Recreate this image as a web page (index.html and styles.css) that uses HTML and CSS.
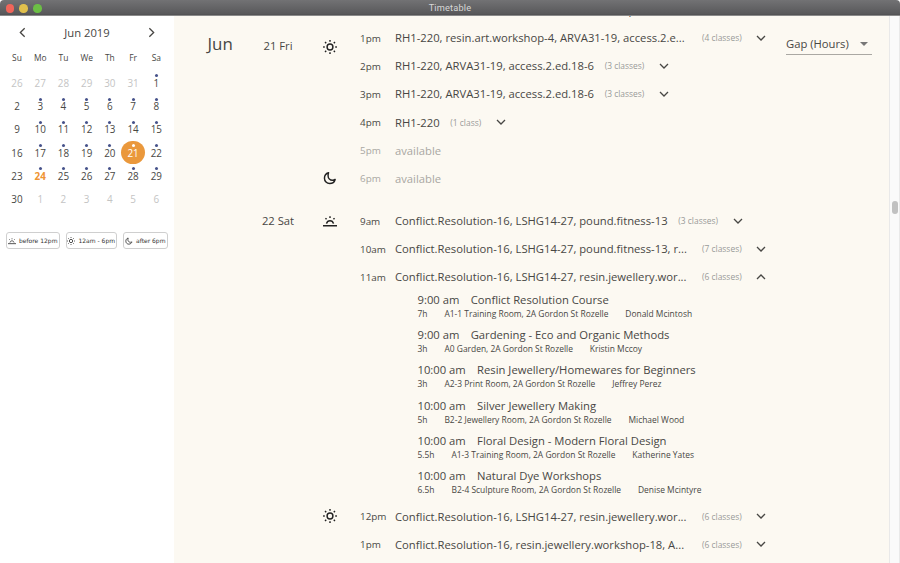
FILE: index.html
```html
<!DOCTYPE html>
<html lang="en">
<head>
<meta charset="utf-8">
<title>Timetable</title>
<link rel="stylesheet" href="styles.css">
</head>
<body>
<svg width="0" height="0" class="defs" aria-hidden="true">
  <symbol id="sun" viewBox="0 0 24 24"><circle cx="12" cy="12" r="5" fill="none" stroke="currentColor" stroke-width="2.5"/><path d="M12 .2v2.8M12 21v2.800M.2 12h2.800M21 12h2.800M3.500 3.500l2 2M18.500 18.500l2 2M3.500 20.500l2-2M18.500 5.500l2-2" fill="none" stroke="currentColor" stroke-width="2.500"/></symbol>
  <symbol id="moon" viewBox="0 0 24 24"><path d="M9.500 3C5 4.200 2.500 8 2.500 12.500c0 5 4 9 9 9 4.500 0 8.300-3 9.300-7-1.300.9-2.800 1.300-4.300 1.300-4.400 0-7.800-3.400-7.800-7.800C8.700 6.200 8.900 4.500 9.500 3z" fill="none" stroke="currentColor" stroke-width="2.500" stroke-linejoin="round"/></symbol>
  <symbol id="rise" viewBox="0 0 24 24"><path d="M0 20h24M6 16.500c.8-3 3-5 6-5s5.200 2 6 5M12 4v2.800M4.200 7.200l1.900 1.900M19.800 7.200l-1.900 1.900" fill="none" stroke="currentColor" stroke-width="2.500"/></symbol>
  <symbol id="down" viewBox="0 0 12 12"><path d="M2 4l4 4 4-4" fill="none" stroke="currentColor" stroke-width="1.300"/></symbol>
  <symbol id="up" viewBox="0 0 12 12"><path d="M2 8l4-4 4 4" fill="none" stroke="currentColor" stroke-width="1.300"/></symbol>
  <symbol id="left" viewBox="0 0 12 12"><path d="M8 2L4 6l4 4" fill="none" stroke="currentColor" stroke-width="1.200"/></symbol>
  <symbol id="right" viewBox="0 0 12 12"><path d="M4 2l4 4-4 4" fill="none" stroke="currentColor" stroke-width="1.200"/></symbol>
</svg>
<div class="window">
  <header class="titlebar">
    <div class="lights"><i class="close"></i><i class="min"></i><i class="max"></i></div>
    <span class="title">Timetable</span>
  </header>
  <div class="body">
    <aside class="sidebar">
      <div class="cal-head"><svg><use href="#left"/></svg><span>Jun 2019</span><svg><use href="#right"/></svg></div>
      <div class="weekdays"><span>Su</span><span>Mo</span><span>Tu</span><span>We</span><span>Th</span><span>Fr</span><span>Sa</span></div>
      <div class="days">
        <span class="out">26</span><span class="out">27</span><span class="out">28</span><span class="out">29</span><span class="out">30</span><span class="out">31</span><span class="dot">1</span>
        <span>2</span><span class="dot">3</span><span class="dot">4</span><span class="dot">5</span><span class="dot">6</span><span class="dot">7</span><span class="dot">8</span>
        <span>9</span><span class="dot">10</span><span class="dot">11</span><span class="dot">12</span><span class="dot">13</span><span class="dot">14</span><span class="dot">15</span>
        <span>16</span><span class="dot">17</span><span class="dot">18</span><span class="dot">19</span><span class="dot">20</span><span class="dot selected">21</span><span class="dot">22</span>
        <span>23</span><span class="dot today">24</span><span class="dot">25</span><span class="dot">26</span><span class="dot">27</span><span class="dot">28</span><span class="dot">29</span>
        <span>30</span><span class="out">1</span><span class="out">2</span><span class="out">3</span><span class="out">4</span><span class="out">5</span><span class="out">6</span>
      </div>
      <div class="filters">
        <button class="f-am"><svg><use href="#rise"/></svg>before 12pm</button>
        <button class="f-day"><svg><use href="#sun"/></svg>12am - 6pm</button>
        <button class="f-pm"><svg><use href="#moon"/></svg>after 6pm</button>
      </div>
    </aside>
    <main class="agenda">
      <h1 class="month">Jun</h1>
      <div class="schedule">
        <section class="day first">
          <h2 class="date">21 Fri</h2>
          <div class="part"><svg><use href="#sun"/></svg></div>
          <div class="slots">
            <div class="slot"><span class="time">12pm</span><span class="label">RH1-220, access.2.ed.18-6, resin.art.workshop-4</span></div>
            <div class="slot"><span class="time">1pm</span><span class="label cut">RH1-220, resin.art.workshop-4, ARVA31-19, access.2.e...</span><span class="count">(4 classes)</span><svg><use href="#down"/></svg></div>
            <div class="slot"><span class="time">2pm</span><span class="label">RH1-220, ARVA31-19, access.2.ed.18-6</span><span class="count">(3 classes)</span><svg><use href="#down"/></svg></div>
            <div class="slot"><span class="time">3pm</span><span class="label">RH1-220, ARVA31-19, access.2.ed.18-6</span><span class="count">(3 classes)</span><svg><use href="#down"/></svg></div>
            <div class="slot"><span class="time">4pm</span><span class="label">RH1-220</span><span class="count">(1 class)</span><svg><use href="#down"/></svg></div>
            <div class="slot free"><span class="time">5pm</span><span class="label">available</span></div>
          </div>
          <div class="part last"><svg><use href="#moon"/></svg></div>
          <div class="slots"><div class="slot free"><span class="time">6pm</span><span class="label">available</span></div></div>
        </section>
        <section class="day">
          <h2 class="date">22 Sat</h2>
          <div class="part"><svg><use href="#rise"/></svg></div>
          <div class="slots">
            <div class="slot"><span class="time">9am</span><span class="label">Conflict.Resolution-16, LSHG14-27, pound.fitness-13</span><span class="count">(3 classes)</span><svg><use href="#down"/></svg></div>
            <div class="slot"><span class="time">10am</span><span class="label cut">Conflict.Resolution-16, LSHG14-27, pound.fitness-13, r...</span><span class="count">(7 classes)</span><svg><use href="#down"/></svg></div>
            <div class="slot"><span class="time">11am</span><span class="label cut">Conflict.Resolution-16, LSHG14-27, resin.jewellery.wor...</span><span class="count">(6 classes)</span><svg><use href="#up"/></svg></div>
            <ul class="classes">
              <li><p class="name"><span>9:00 am</span><span>Conflict Resolution Course</span></p><p class="info"><span>7h</span><span>A1-1 Training Room, 2A Gordon St Rozelle</span><span>Donald Mcintosh</span></p></li>
              <li><p class="name"><span>9:00 am</span><span>Gardening - Eco and Organic Methods</span></p><p class="info"><span>3h</span><span>A0 Garden, 2A Gordon St Rozelle</span><span>Kristin Mccoy</span></p></li>
              <li><p class="name"><span>10:00 am</span><span>Resin Jewellery/Homewares for Beginners</span></p><p class="info"><span>3h</span><span>A2-3 Print Room, 2A Gordon St Rozelle</span><span>Jeffrey Perez</span></p></li>
              <li><p class="name"><span>10:00 am</span><span>Silver Jewellery Making</span></p><p class="info"><span>5h</span><span>B2-2 Jewellery Room, 2A Gordon St Rozelle</span><span>Michael Wood</span></p></li>
              <li><p class="name"><span>10:00 am</span><span>Floral Design - Modern Floral Design</span></p><p class="info"><span>5.5h</span><span>A1-3 Training Room, 2A Gordon St Rozelle</span><span>Katherine Yates</span></p></li>
              <li><p class="name"><span>10:00 am</span><span>Natural Dye Workshops</span></p><p class="info"><span>6.5h</span><span>B2-4 Sculpture Room, 2A Gordon St Rozelle</span><span>Denise Mcintyre</span></p></li>
            </ul>
          </div>
          <div class="part"><svg><use href="#sun"/></svg></div>
          <div class="slots">
            <div class="slot"><span class="time">12pm</span><span class="label cut">Conflict.Resolution-16, LSHG14-27, resin.jewellery.wor...</span><span class="count">(6 classes)</span><svg><use href="#down"/></svg></div>
            <div class="slot"><span class="time">1pm</span><span class="label cut">Conflict.Resolution-16, resin.jewellery.workshop-18, A...</span><span class="count">(6 classes)</span><svg><use href="#down"/></svg></div>
          </div>
        </section>
      </div>
      <div class="gap"><span>Gap (Hours)</span><i></i></div>
      <div class="scroll"><i></i></div>
    </main>
  </div>
</div>
</body>
</html>
```
FILE: styles.css
```css
* { box-sizing: border-box; margin: 0; padding: 0; }
html { background: #fff; }
body { font-family: "Open Sans", "Noto Sans", sans-serif; color: #484744; overflow: hidden; }
.defs { position: absolute; }
ul { list-style: none; }
.window { height: 563px; display: flex; flex-direction: column; border-radius: 4px 4px 0 0; overflow: hidden; }

.titlebar { flex: none; height: 16px; display: grid; grid-template-columns: 60px 1fr 60px; align-items: center; background: linear-gradient(#727274, #59595b 90%, #505052); border-bottom: 1px solid #8a8a8a; }
.lights { display: flex; gap: 5.300px; padding: 1px 0 0 5.500px; }
.lights i { width: 8.500px; height: 8.500px; border-radius: 50%; }
.close { background: #f0655a; }
.min { background: #e1c04c; }
.max { background: #6cbf45; }
.title { text-align: center; font: 400 9.200px/16px Roboto, sans-serif; color: #d8d8d8; letter-spacing: .2px; }

.body { flex: 1; min-height: 0; display: flex; }
.sidebar { width: 173.500px; flex: none; background: #fff; }
.cal-head { height: 33px; display: flex; align-items: center; justify-content: space-between; padding: 0 15.500px 0 16px; font-size: 11.264px; }
.cal-head svg { width: 13px; height: 13px; }
.weekdays, .days { display: grid; grid-template-columns: repeat(7, 23.230px); padding-left: 5.400px; text-align: center; }
.weekdays { height: 22px; line-height: 18px; font-size: 8.448px; }
.days { grid-auto-rows: 23.230px; font-size: 9.900px; line-height: 24px; }
.days span { position: relative; border-radius: 50%; }
.days .out { color: #c4c4c4; }
.dot::before { content: ""; position: absolute; left: 10.200px; top: 3.300px; width: 3px; height: 3px; border-radius: 50%; background: #46528a; }
.days .selected { background: #ea983c; color: #fff; }
.selected::before { background: #fff; }
.days .today { color: #ef9433; font-weight: 700; }
.filters { display: flex; gap: 5.500px; padding: 22px 0 0 5.500px; }
.filters button { height: 17px; display: flex; align-items: center; justify-content: center; gap: 3px; border: 1px solid #cfcfcf; border-radius: 3px; background: #fff; color: #333; font: 400 6px "DejaVu Sans", sans-serif; white-space: nowrap; }
.filters svg { width: 8px; height: 8px; }
.f-am { width: 54.500px; }
.f-day { width: 51.500px; }
.f-pm { width: 45.500px; }

.agenda { flex: 1; min-width: 0; display: flex; background: #fcf9f2; }
.month { width: 72.500px; padding: 15px 0 0 34px; font-size: 16.900px; font-weight: 400; line-height: 26px; }
.schedule { flex: 1; min-width: 0; overflow: hidden; }
.day { display: grid; grid-template-columns: 64px 40px 1fr; padding-bottom: 14px; }
.first { margin-top: -20.600px; }
.date { grid-row: span 2; text-align: center; font-size: 11.264px; font-weight: 400; line-height: 28px; }
.first .date { padding-top: 37px; }
.part { height: 28.160px; display: flex; align-items: center; justify-content: center; color: #222; }
.part svg { width: 14px; height: 14px; }
.first .part:not(.last) { margin-top: 37.800px; }
.slots { padding-left: 10px; min-width: 0; }
.slot { height: 28.160px; display: flex; align-items: center; white-space: nowrap; }
.time { width: 35px; font-size: 9.856px; }
.first .slots:nth-child(3) .slot:first-child .time { padding-top: 2px; }
.label { margin-right: 10.700px; font-size: 11.264px; }
.cut { width: 296.300px; }
.count { font-size: 8.448px; color: #999; }
.slot svg { width: 12px; height: 12px; margin-left: 13.800px; }
.free { color: #a9a7a2; }
.classes { padding-left: 57.500px; }
.classes li { height: 35.200px; }
.name, .info { display: flex; white-space: nowrap; }
.name { gap: 11.300px; font-size: 11.264px; line-height: 17px; }
.info { gap: 16.900px; font-size: 8.448px; line-height: 12px; }
.gap { width: 86px; height: 23px; flex: none; margin: 16px 17px 0 0; display: flex; justify-content: space-between; border-bottom: 1px solid #aaa8a3; font-size: 11.264px; line-height: 23px; }
.gap i { margin: 10px 4px 0 0; width: 8px; height: 4px; background: #777; clip-path: polygon(0 0, 100% 0, 50% 100%); }
.scroll { width: 11px; flex: none; background: #fafafa; border: solid #e9e9e9; border-width: 0 1px; padding: 185px 0 0 2px; }
.scroll i { display: block; width: 6px; height: 13px; border-radius: 3px; background: #c1c1c1; }
```
